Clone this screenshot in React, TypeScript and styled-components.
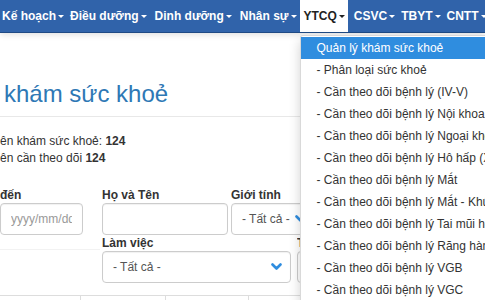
import React from 'react';
import styled, { createGlobalStyle } from 'styled-components';

const GlobalStyle = createGlobalStyle`
  html, body {
    margin: 0;
    padding: 0;
    overflow: hidden;
    background: #fff;
  }
  body {
    font-family: "Liberation Sans", Arial, sans-serif;
    color: #333;
    font-size: 12px;
  }
  * { box-sizing: border-box; }
`;

const Page = styled.div`
  width: 485px;
  height: 300px;
  position: relative;
  overflow: hidden;
`;

const Navbar = styled.nav`
  display: flex;
  height: 33px;
  background: #3063aa;
  border-bottom: 1px solid #1f4a84;
  box-shadow: 0 2px 6px rgba(0, 0, 0, 0.12);
  white-space: nowrap;
  position: relative;
  z-index: 2;
`;

const NavItem = styled.div<{ $active?: boolean; $wide?: boolean }>`
  position: relative;
  display: flex;
  align-items: center;
  height: 32px;
  padding: 0 ${p => (p.$wide ? '5px' : '3px')} 0 ${p => (p.$active ? '4px' : '3px')};
  margin-right: ${p => (p.$active ? '3px' : '0')};
  font-weight: bold;
  font-size: 12px;
  color: ${p => (p.$active ? '#222' : '#fff')};
  background: ${p => (p.$active ? '#fff' : 'transparent')};
  flex-shrink: 0;
  &:first-child {
    margin-left: -1px;
  }
`;

const Caret = styled.span<{ $dark?: boolean }>`
  display: inline-block;
  margin-left: 2px;
  margin-top: 1px;
  border-top: 3px solid ${p => (p.$dark ? '#222' : '#fff')};
  border-left: 3px solid transparent;
  border-right: 3px solid transparent;
`;

const DropdownMenu = styled.ul`
  position: absolute;
  top: 35px;
  left: 0;
  width: 240px;
  margin: 0;
  padding: 1px 0;
  list-style: none;
  background: #fff;
  border: 1px solid rgba(0, 0, 0, 0.15);
  border-radius: 3px 0 0 3px;
  box-shadow: 0 6px 12px rgba(0, 0, 0, 0.18);
`;

const DropdownItem = styled.li<{ $active?: boolean }>`
  height: 22px;
  line-height: 22px;
  padding: 0 16px;
  font-weight: normal;
  font-size: 12px;
  color: ${p => (p.$active ? '#fff' : '#333')};
  background: ${p => (p.$active ? '#2f8ddf' : 'transparent')};
  white-space: nowrap;
`;

const Content = styled.main`
  padding: 0;
`;

const Title = styled.h1`
  margin: 48px 0 0 4px;
  font-size: 24px;
  line-height: 26px;
  font-weight: normal;
  color: #2e78b5;
  white-space: nowrap;
`;

const Rule = styled.hr`
  margin: 9px 0 0 0;
  border: 0;
  border-top: 1px solid #e8e8e8;
`;

const Stats = styled.div`
  margin-top: 16px;
  line-height: 17px;
  font-size: 12px;
  color: #333;
  white-space: nowrap;
`;

const FilterRow = styled.div<{ $top: number }>`
  display: flex;
  align-items: flex-start;
  margin-top: ${p => p.$top}px;
  white-space: nowrap;
`;

const Field = styled.div<{ $width: number; $gap: number }>`
  width: ${p => p.$width}px;
  margin-left: ${p => p.$gap}px;
  flex-shrink: 0;
  display: flex;
  flex-direction: column;
`;

const Label = styled.label`
  font-weight: bold;
  font-size: 12px;
  line-height: 15px;
  color: #333;
  overflow: hidden;
`;

const TextInput = styled.input`
  height: 32px;
  width: 100%;
  padding: 0 10px;
  border: 1px solid #ccc;
  border-radius: 4px;
  box-shadow: inset 0 1px 1px rgba(0, 0, 0, 0.06);
  font-family: inherit;
  font-size: 12px;
  color: #555;
  &::placeholder {
    color: #999;
  }
`;

const SelectBox = styled.div`
  height: 32px;
  display: flex;
  align-items: center;
  justify-content: space-between;
  padding: 0 8px 0 10px;
  border: 1px solid #ccc;
  border-radius: 4px;
  box-shadow: inset 0 1px 1px rgba(0, 0, 0, 0.06);
  font-size: 12px;
  color: #555;
`;

const FaintLine = styled.div`
  margin-top: 13px;
  border-top: 1px solid #f2f2f2;
`;

const TableHead = styled.div`
  display: flex;
  margin-top: 12px;
  border-top: 1px solid #ddd;
  height: 10px;
`;

const HeadCell = styled.div<{ $width: number }>`
  width: ${p => p.$width}px;
  flex-shrink: 0;
  border-right: 1px solid #ddd;
`;

const Chevron = () => (
  <svg width="11" height="8" viewBox="0 0 11 8">
    <polyline points="1.5,1.5 5.5,5.5 9.5,1.5" fill="none" stroke="#2f8ddf" strokeWidth="2.6" strokeLinecap="round" strokeLinejoin="round" />
  </svg>
);

const Select = ({ value }: { value: string }) => (
  <SelectBox>
    <span>{value}</span>
    <Chevron />
  </SelectBox>
);

const navItems = ['Kế hoạch', 'Điều dưỡng', 'Dinh dưỡng', 'Nhân sự', 'YTCQ', 'CSVC', 'TBYT', 'CNTT'];

const menuItems = [
  'Quản lý khám sức khoẻ',
  '- Phân loại sức khoẻ',
  '- Cần theo dõi bệnh lý (IV-V)',
  '- Cần theo dõi bệnh lý Nội khoa',
  '- Cần theo dõi bệnh lý Ngoại khoa',
  '- Cần theo dõi bệnh lý Hô hấp (X-quang)',
  '- Cần theo dõi bệnh lý Mắt',
  '- Cần theo dõi bệnh lý Mắt - Khúc xạ',
  '- Cần theo dõi bệnh lý Tai mũi họng',
  '- Cần theo dõi bệnh lý Răng hàm mặt',
  '- Cần theo dõi bệnh lý VGB',
  '- Cần theo dõi bệnh lý VGC',
];

export default function App() {
  return (
    <Page>
      <GlobalStyle />
      <Navbar>
        {navItems.map(item => {
          const active = item === 'YTCQ';
          return (
            <NavItem key={item} $active={active} $wide={item === 'Điều dưỡng' || item === 'Dinh dưỡng'}>
              {item}
              <Caret $dark={active} />
              {active && (
                <DropdownMenu>
                  {menuItems.map((m, i) => (
                    <DropdownItem key={m} $active={i === 0}>{m}</DropdownItem>
                  ))}
                </DropdownMenu>
              )}
            </NavItem>
          );
        })}
      </Navbar>

      <Content>
        <Title>khám sức khoẻ</Title>
        <Rule />
        <Stats>
          <div>ên khám sức khoẻ: <b>124</b></div>
          <div>ên cần theo dõi <b>124</b></div>
        </Stats>

        <FilterRow $top={21}>
          <Field $width={83} $gap={0}>
            <Label>đến</Label>
            <TextInput placeholder="yyyy/mm/dd" />
          </Field>
          <Field $width={126} $gap={19}>
            <Label>Họ và Tên</Label>
            <TextInput />
          </Field>
          <Field $width={84} $gap={3}>
            <Label>Giới tính</Label>
            <Select value="- Tất cả -" />
          </Field>
        </FilterRow>

        <FilterRow $top={1}>
          <Field $width={100} $gap={0}>
            <FaintLine />
          </Field>
          <Field $width={189} $gap={2}>
            <Label>Làm việc</Label>
            <Select value="- Tất cả -" />
          </Field>
          <Field $width={120} $gap={6}>
            <Label>Tình trạng</Label>
            <Select value="- Tất cả -" />
          </Field>
        </FilterRow>

        <TableHead>
          <HeadCell $width={81} />
          <HeadCell $width={85} />
          <HeadCell $width={83} />
          <HeadCell $width={84} />
        </TableHead>
      </Content>
    </Page>
  );
}
